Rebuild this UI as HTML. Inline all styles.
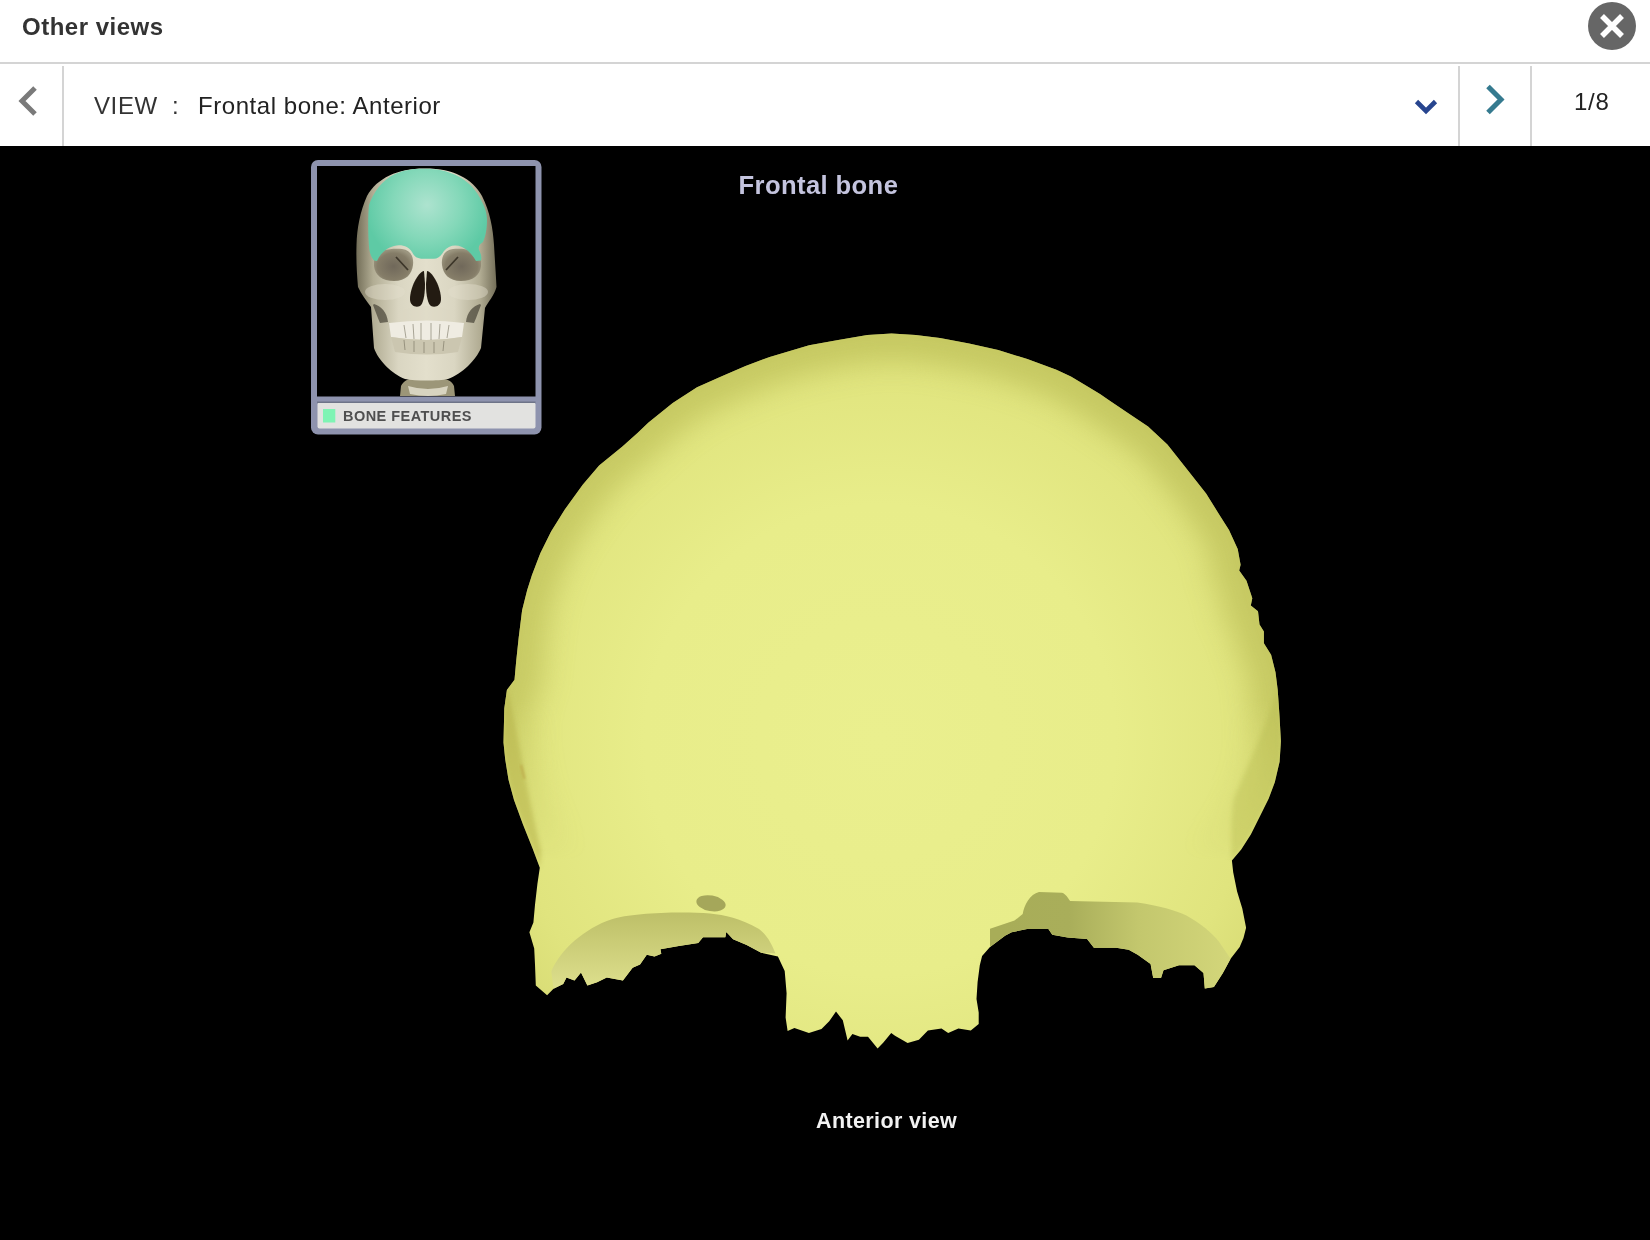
<!DOCTYPE html>
<html><head><meta charset="utf-8">
<style>
html,body{margin:0;padding:0;}
body{width:1650px;height:1240px;position:relative;overflow:hidden;background:#000;font-family:"Liberation Sans",sans-serif;}
.hdr{position:absolute;left:0;top:0;width:1650px;height:62px;background:#fff;}
.title{position:absolute;left:22px;top:11.5px;letter-spacing:0.5px;font-size:24px;font-weight:bold;color:#333;line-height:30px;white-space:nowrap;}
.hline{position:absolute;left:0;top:62px;width:1650px;height:2px;background:#d4d4d4;}
.bar{position:absolute;left:0;top:64px;width:1650px;height:82px;background:#fff;}
.vl{position:absolute;top:66px;width:2px;height:80px;background:#d4d4d4;}
.viewlbl{position:absolute;left:94px;top:91px;letter-spacing:0.6px;font-size:24px;color:#333;line-height:30px;white-space:nowrap;}
.viewval{position:absolute;left:198px;top:91px;letter-spacing:0.55px;font-size:24px;color:#222;line-height:30px;white-space:nowrap;}
.count{position:absolute;left:1574px;top:87px;letter-spacing:0.7px;font-size:24px;color:#222;line-height:30px;white-space:nowrap;}
.stage{position:absolute;left:0;top:146px;width:1650px;height:1094px;background:#000;}
svg{position:absolute;left:0;top:0;will-change:transform;}
.title,.viewlbl,.viewval,.count{will-change:transform;}
</style></head>
<body>
<div class="hdr"></div>
<div class="title">Other views</div>
<div class="hline"></div>
<div class="bar"></div>
<div class="vl" style="left:62px"></div>
<div class="vl" style="left:1458px"></div>
<div class="vl" style="left:1530px"></div>
<div class="viewlbl">VIEW</div><div class="viewlbl" style="left:172px">:</div>
<div class="viewval">Frontal bone: Anterior</div>
<div class="count">1/8</div>
<div class="stage"></div>
<svg width="1650" height="1240" viewBox="0 0 1650 1240">
  
  <defs>
    <radialGradient id="bg1" cx="880" cy="740" r="470" gradientUnits="userSpaceOnUse">
      <stop offset="0" stop-color="#eaef8e"/>
      <stop offset="0.5" stop-color="#e8ed8a"/>
      <stop offset="0.8" stop-color="#e0e47e"/>
      <stop offset="1" stop-color="#d4d770"/>
    </radialGradient>
    <linearGradient id="rimfade" x1="0" y1="700" x2="0" y2="860" gradientUnits="userSpaceOnUse"><stop offset="0" stop-color="#fff"/><stop offset="1" stop-color="#000"/></linearGradient>
    <mask id="rimmask" maskUnits="userSpaceOnUse" x="0" y="0" width="1650" height="1240"><rect x="0" y="0" width="1650" height="1240" fill="url(#rimfade)"/></mask>
    <clipPath id="boneclip"><path d="M891.5 333.6 L915.8 335.0 L940.0 338.1 L969.1 343.6 L998.2 349.9 L1027.3 359.1 L1056.4 369.8 L1070.9 376.5 L1085.5 385.3 L1100.0 394.0 L1109.4 400.6 L1128.7 413.5 L1148.1 426.5 L1167.4 444.5 L1186.8 469.0 L1206.1 493.5 L1219.0 514.2 L1229.0 530.0 L1237.7 548.9 L1240.6 564.8 L1239.2 570.6 L1246.5 580.8 L1252.3 598.2 L1250.8 605.5 L1258.0 611.3 L1259.5 624.4 L1263.9 631.6 L1263.9 643.2 L1271.1 654.8 L1275.5 672.3 L1277.7 689.7 L1279.1 710.0 L1279.6 717.8 L1280.9 741.2 L1279.6 761.7 L1274.8 782.3 L1268.6 798.8 L1260.4 815.2 L1250.8 834.4 L1241.2 849.5 L1231.9 860.6 L1233.2 872.3 L1237.1 891.6 L1242.3 908.4 L1246.1 927.7 L1243.5 938.1 L1239.7 947.1 L1230.6 958.7 L1222.9 972.9 L1213.9 987.1 L1204.8 988.4 L1203.5 972.9 L1194.5 965.2 L1179.0 965.2 L1163.5 970.3 L1161.0 978.1 L1153.2 978.1 L1150.6 963.9 L1137.7 954.8 L1128.7 949.7 L1116.2 947.7 L1093.9 947.7 L1087.1 939.0 L1067.7 937.6 L1052.3 934.7 L1048.4 928.9 L1027.1 928.9 L1011.6 932.3 L1005.0 935.8 L990.0 947.1 L982.1 956.1 L979.8 965.2 L977.6 982.1 L976.5 999.0 L978.7 1012.6 L978.7 1023.9 L970.8 1030.6 L958.4 1028.4 L948.2 1032.9 L941.5 1028.4 L927.9 1030.6 L918.9 1039.7 L907.6 1043.1 L895.0 1035.8 L891.2 1033.0 L883.4 1042.6 L877.6 1048.4 L868.0 1036.8 L860.2 1036.8 L852.4 1033.9 L847.6 1040.6 L842.8 1020.3 L836.0 1011.6 L829.2 1021.3 L821.5 1029.0 L808.9 1032.9 L794.4 1028.0 L787.6 1031.0 L785.6 1017.4 L786.6 993.2 L784.7 971.0 L777.9 956.5 L761.2 952.7 L746.7 945.0 L733.1 939.2 L726.3 931.9 L725.3 937.2 L703.0 937.2 L698.2 943.0 L678.8 946.0 L660.4 949.3 L661.3 953.7 L654.5 956.6 L646.8 954.7 L640.0 964.4 L632.6 967.7 L622.9 980.6 L606.8 977.4 L597.1 982.3 L587.4 985.5 L581.0 972.6 L574.5 980.6 L566.5 977.4 L563.2 983.9 L553.5 988.7 L547.1 995.2 L535.8 985.5 L535.0 964.5 L534.2 948.4 L529.4 932.3 L533.4 922.6 L535.0 904.8 L537.4 883.9 L539.8 867.7 L532.6 848.4 L522.9 824.2 L514.0 800.0 L508.5 779.7 L505.2 759.3 L503.5 742.4 L504.3 708.5 L506.9 690.0 L514.5 679.8 L516.2 661.1 L518.7 637.4 L522.1 610.3 L527.2 590.0 L531.9 575.3 L540.2 553.4 L551.1 531.5 L564.8 509.5 L582.7 484.8 L599.1 465.6 L622.4 446.5 L637.5 433.0 L648.5 422.4 L672.7 403.0 L697.0 387.3 L721.2 376.4 L745.5 366.0 L769.7 357.0 L809.1 345.2 L838.2 339.9 L867.3 335.0Z"/></clipPath>
    <filter id="blur6" x="-10%" y="-10%" width="120%" height="120%"><feGaussianBlur stdDeviation="14"/></filter>
  </defs>
  <path d="M891.5 333.6 L915.8 335.0 L940.0 338.1 L969.1 343.6 L998.2 349.9 L1027.3 359.1 L1056.4 369.8 L1070.9 376.5 L1085.5 385.3 L1100.0 394.0 L1109.4 400.6 L1128.7 413.5 L1148.1 426.5 L1167.4 444.5 L1186.8 469.0 L1206.1 493.5 L1219.0 514.2 L1229.0 530.0 L1237.7 548.9 L1240.6 564.8 L1239.2 570.6 L1246.5 580.8 L1252.3 598.2 L1250.8 605.5 L1258.0 611.3 L1259.5 624.4 L1263.9 631.6 L1263.9 643.2 L1271.1 654.8 L1275.5 672.3 L1277.7 689.7 L1279.1 710.0 L1279.6 717.8 L1280.9 741.2 L1279.6 761.7 L1274.8 782.3 L1268.6 798.8 L1260.4 815.2 L1250.8 834.4 L1241.2 849.5 L1231.9 860.6 L1233.2 872.3 L1237.1 891.6 L1242.3 908.4 L1246.1 927.7 L1243.5 938.1 L1239.7 947.1 L1230.6 958.7 L1222.9 972.9 L1213.9 987.1 L1204.8 988.4 L1203.5 972.9 L1194.5 965.2 L1179.0 965.2 L1163.5 970.3 L1161.0 978.1 L1153.2 978.1 L1150.6 963.9 L1137.7 954.8 L1128.7 949.7 L1116.2 947.7 L1093.9 947.7 L1087.1 939.0 L1067.7 937.6 L1052.3 934.7 L1048.4 928.9 L1027.1 928.9 L1011.6 932.3 L1005.0 935.8 L990.0 947.1 L982.1 956.1 L979.8 965.2 L977.6 982.1 L976.5 999.0 L978.7 1012.6 L978.7 1023.9 L970.8 1030.6 L958.4 1028.4 L948.2 1032.9 L941.5 1028.4 L927.9 1030.6 L918.9 1039.7 L907.6 1043.1 L895.0 1035.8 L891.2 1033.0 L883.4 1042.6 L877.6 1048.4 L868.0 1036.8 L860.2 1036.8 L852.4 1033.9 L847.6 1040.6 L842.8 1020.3 L836.0 1011.6 L829.2 1021.3 L821.5 1029.0 L808.9 1032.9 L794.4 1028.0 L787.6 1031.0 L785.6 1017.4 L786.6 993.2 L784.7 971.0 L777.9 956.5 L761.2 952.7 L746.7 945.0 L733.1 939.2 L726.3 931.9 L725.3 937.2 L703.0 937.2 L698.2 943.0 L678.8 946.0 L660.4 949.3 L661.3 953.7 L654.5 956.6 L646.8 954.7 L640.0 964.4 L632.6 967.7 L622.9 980.6 L606.8 977.4 L597.1 982.3 L587.4 985.5 L581.0 972.6 L574.5 980.6 L566.5 977.4 L563.2 983.9 L553.5 988.7 L547.1 995.2 L535.8 985.5 L535.0 964.5 L534.2 948.4 L529.4 932.3 L533.4 922.6 L535.0 904.8 L537.4 883.9 L539.8 867.7 L532.6 848.4 L522.9 824.2 L514.0 800.0 L508.5 779.7 L505.2 759.3 L503.5 742.4 L504.3 708.5 L506.9 690.0 L514.5 679.8 L516.2 661.1 L518.7 637.4 L522.1 610.3 L527.2 590.0 L531.9 575.3 L540.2 553.4 L551.1 531.5 L564.8 509.5 L582.7 484.8 L599.1 465.6 L622.4 446.5 L637.5 433.0 L648.5 422.4 L672.7 403.0 L697.0 387.3 L721.2 376.4 L745.5 366.0 L769.7 357.0 L809.1 345.2 L838.2 339.9 L867.3 335.0Z" fill="url(#bg1)"/>
  <g clip-path="url(#boneclip)" mask="url(#rimmask)"><path d="M891.5 333.6 L915.8 335.0 L940.0 338.1 L969.1 343.6 L998.2 349.9 L1027.3 359.1 L1056.4 369.8 L1070.9 376.5 L1085.5 385.3 L1100.0 394.0 L1109.4 400.6 L1128.7 413.5 L1148.1 426.5 L1167.4 444.5 L1186.8 469.0 L1206.1 493.5 L1219.0 514.2 L1229.0 530.0 L1237.7 548.9 L1240.6 564.8 L1239.2 570.6 L1246.5 580.8 L1252.3 598.2 L1250.8 605.5 L1258.0 611.3 L1259.5 624.4 L1263.9 631.6 L1263.9 643.2 L1271.1 654.8 L1275.5 672.3 L1277.7 689.7 L1279.1 710.0 L1279.6 717.8 L1280.9 741.2 L1279.6 761.7 L1274.8 782.3 L1268.6 798.8 L1260.4 815.2 L1250.8 834.4 L1241.2 849.5 L1231.9 860.6 L1233.2 872.3 L1237.1 891.6 L1242.3 908.4 L1246.1 927.7 L1243.5 938.1 L1239.7 947.1 L1230.6 958.7 L1222.9 972.9 L1213.9 987.1 L1204.8 988.4 L1203.5 972.9 L1194.5 965.2 L1179.0 965.2 L1163.5 970.3 L1161.0 978.1 L1153.2 978.1 L1150.6 963.9 L1137.7 954.8 L1128.7 949.7 L1116.2 947.7 L1093.9 947.7 L1087.1 939.0 L1067.7 937.6 L1052.3 934.7 L1048.4 928.9 L1027.1 928.9 L1011.6 932.3 L1005.0 935.8 L990.0 947.1 L982.1 956.1 L979.8 965.2 L977.6 982.1 L976.5 999.0 L978.7 1012.6 L978.7 1023.9 L970.8 1030.6 L958.4 1028.4 L948.2 1032.9 L941.5 1028.4 L927.9 1030.6 L918.9 1039.7 L907.6 1043.1 L895.0 1035.8 L891.2 1033.0 L883.4 1042.6 L877.6 1048.4 L868.0 1036.8 L860.2 1036.8 L852.4 1033.9 L847.6 1040.6 L842.8 1020.3 L836.0 1011.6 L829.2 1021.3 L821.5 1029.0 L808.9 1032.9 L794.4 1028.0 L787.6 1031.0 L785.6 1017.4 L786.6 993.2 L784.7 971.0 L777.9 956.5 L761.2 952.7 L746.7 945.0 L733.1 939.2 L726.3 931.9 L725.3 937.2 L703.0 937.2 L698.2 943.0 L678.8 946.0 L660.4 949.3 L661.3 953.7 L654.5 956.6 L646.8 954.7 L640.0 964.4 L632.6 967.7 L622.9 980.6 L606.8 977.4 L597.1 982.3 L587.4 985.5 L581.0 972.6 L574.5 980.6 L566.5 977.4 L563.2 983.9 L553.5 988.7 L547.1 995.2 L535.8 985.5 L535.0 964.5 L534.2 948.4 L529.4 932.3 L533.4 922.6 L535.0 904.8 L537.4 883.9 L539.8 867.7 L532.6 848.4 L522.9 824.2 L514.0 800.0 L508.5 779.7 L505.2 759.3 L503.5 742.4 L504.3 708.5 L506.9 690.0 L514.5 679.8 L516.2 661.1 L518.7 637.4 L522.1 610.3 L527.2 590.0 L531.9 575.3 L540.2 553.4 L551.1 531.5 L564.8 509.5 L582.7 484.8 L599.1 465.6 L622.4 446.5 L637.5 433.0 L648.5 422.4 L672.7 403.0 L697.0 387.3 L721.2 376.4 L745.5 366.0 L769.7 357.0 L809.1 345.2 L838.2 339.9 L867.3 335.0Z" fill="none" stroke="#b4b650" stroke-width="56" filter="url(#blur6)" opacity="0.55"/></g>

  <g clip-path="url(#boneclip)"><path d="M506.9 690 C 512 705 516 730 521 755 C 526 785 534 820 541 850 L539.8 867.7 L532.6 848.4 L522.9 824.2 L514 800 L508.5 779.7 L505.2 759.3 L503.5 742.4 L504.3 708.5 Z" fill="#b4b04a" opacity="0.5" filter="url(#blur2)"/></g>
  <path d="M521 765 L524.5 779" stroke="#b89a3c" stroke-width="2.5" opacity="0.5" filter="url(#blur1)"/>
  <g clip-path="url(#boneclip)"><path d="M1277.7 689.7 C 1272 705 1268 718 1264 727 C 1256 748 1244 775 1234 798 C 1231 815 1231 840 1231.9 860.6 L1241.2 849.5 L1250.8 834.4 L1260.4 815.2 L1268.6 798.8 L1274.8 782.3 L1279.6 761.7 L1280.9 741.2 L1279.6 717.8 L1279.1 710 Z" fill="#b4b850" opacity="0.35" filter="url(#blur2)"/></g>
  <defs>
    <filter id="blur2" x="-20%" y="-20%" width="140%" height="140%"><feGaussianBlur stdDeviation="2"/></filter><filter id="blur1" x="-50%" y="-50%" width="200%" height="200%"><feGaussianBlur stdDeviation="0.8"/></filter>
    <linearGradient id="orbL" x1="0" y1="912" x2="0" y2="985" gradientUnits="userSpaceOnUse">
      <stop offset="0" stop-color="#bdbf68"/>
      <stop offset="0.35" stop-color="#c8ca74"/>
      <stop offset="1" stop-color="#dcde8c"/>
    </linearGradient>
    <linearGradient id="orbR" x1="1000" y1="0" x2="1230" y2="0" gradientUnits="userSpaceOnUse">
      <stop offset="0" stop-color="#a8ad58"/>
      <stop offset="0.3" stop-color="#a9ae5a"/>
      <stop offset="0.6" stop-color="#c3c76d"/>
      <stop offset="1" stop-color="#d3d67a"/>
    </linearGradient>
  </defs>
  <path d="M551.3 971.6 C 560 950 585 928 611.8 919.3 C 630 913 680 911 710 913.5 C 725 915 740 918 759 929 C 768 936 772 945 775.5 953.6 L761.2 952.7 L746.7 945 L733.1 939.2 L726.3 931.9 L725.3 937.2 L703 937.2 L698.2 943 L678.8 946 L660.4 949.3 L661.3 953.7 L654.5 956.6 L646.8 954.7 L640 964.4 L632.6 967.7 L622.9 980.6 L606.8 977.4 L597.1 982.3 L587.4 985.5 L581 972.6 L574.5 980.6 L566.5 977.4 L563.2 983.9 L553.5 988.7 Z" fill="url(#orbL)"/>
  <path d="M990 947.1 L990 928.7 L1014.5 920.6 L1022.7 914 C 1024 905 1030 894 1039 891.9 L1062 892.7 C 1066 894 1068 898 1070.2 901 L1137.3 902.5 C 1160 906 1175 910 1186.4 915.6 C 1200 923 1212 933 1219 941.8 L1230.6 958.7 L1222.9 972.9 L1213.9 987.1 L1204.8 988.4 L1203.5 972.9 L1194.5 965.2 L1179 965.2 L1163.5 970.3 L1161 978.1 L1153.2 978.1 L1150.6 963.9 L1137.7 954.8 L1128.7 949.7 L1116.2 947.7 L1093.9 947.7 L1087.1 939 L1067.7 937.6 L1052.3 934.7 L1048.4 928.9 L1027.1 928.9 L1011.6 932.3 L1005 935.8 Z" fill="url(#orbR)"/>

  <ellipse cx="711" cy="903.3" rx="14.8" ry="7.8" transform="rotate(10 711 903.3)" fill="#a5a75a"/>
  <text x="738.5" y="194" font-family="Liberation Sans" font-weight="bold" font-size="25.6" letter-spacing="0.4" fill="#c4c4de">Frontal bone</text>
  <text x="816" y="1128" font-family="Liberation Sans" font-weight="bold" font-size="21.5" letter-spacing="0.38" fill="#f2f2f2">Anterior view</text>

  
  <!-- thumbnail -->
  <defs>
    <linearGradient id="skullg" x1="0" y1="0" x2="1" y2="0">
      <stop offset="0" stop-color="#736e58"/>
      <stop offset="0.12" stop-color="#b2ad94"/>
      <stop offset="0.3" stop-color="#dad6c2"/>
      <stop offset="0.5" stop-color="#e3dfcc"/>
      <stop offset="0.7" stop-color="#dad6c2"/>
      <stop offset="0.88" stop-color="#b2ad94"/>
      <stop offset="1" stop-color="#736e58"/>
    </linearGradient>
    <radialGradient id="tealg" cx="427" cy="205" r="62" gradientUnits="userSpaceOnUse">
      <stop offset="0" stop-color="#ade3cf"/>
      <stop offset="0.55" stop-color="#84d8b9"/>
      <stop offset="1" stop-color="#5ecaa5"/>
    </radialGradient>
    <radialGradient id="orbg" cx="0.5" cy="0.55" r="0.55">
      <stop offset="0" stop-color="#70685a"/>
      <stop offset="0.75" stop-color="#857d68"/>
      <stop offset="1" stop-color="#9c9680"/>
    </radialGradient>
  </defs>
  <rect x="311" y="160" width="230.5" height="274.5" rx="7" fill="#8e93ae"/>
  <rect x="317" y="166" width="218.5" height="230.5" fill="#000"/>
  <rect x="317.5" y="402.5" width="218" height="26" rx="2" fill="#e2e2e0"/>
  <rect x="317" y="401.5" width="218.5" height="1.5" fill="#6e7488"/>
  <rect x="323" y="409" width="12.3" height="13.5" fill="#7ff4b4"/>
  <text x="343" y="421" font-family="Liberation Sans" font-weight="bold" font-size="14.5" letter-spacing="0.46" fill="#4f4f4f">BONE FEATURES</text>
  <!-- neck -->
  <path d="M400 396 L401 386 C 404 380 410 378 414 379 L 440 379 C 446 378 452 381 454 386 L455 396 Z" fill="#9c9678"/>
  <path d="M408 386 Q428 392 448 386 L446 394 Q428 398 410 394Z" fill="#d8d4c0"/>
  <!-- skull -->
  <path d="M424 168.5 C 452 168 472 178 482 196 C 490 212 493 228 494 245 C 495 262 496 276 496.5 287 C 494 296 488 302 485 308 L 481 348 C 476 360 462 374 448 379 C 438 381 416 381 405 379 C 392 374 378 360 374 348 L 371 307 C 366 300 361 294 358 287 C 357 275 356 262 356.5 245 C 357 228 360 212 367 196 C 377 178 398 168.5 424 168.5 Z" fill="url(#skullg)"/>
  <!-- cheekbones bright -->
  <ellipse cx="385" cy="292" rx="20" ry="8" fill="#e2decb" opacity="0.45"/>
  <ellipse cx="468" cy="292" rx="20" ry="8" fill="#e2decb" opacity="0.45"/>
  <ellipse cx="426" cy="316" rx="28" ry="10" fill="#dcd8c4" opacity="0.4"/>
  <!-- cheek shadows -->
  <path d="M374 304 C 381 306 387 312 388 322 L 380 323 C 377 316 375 310 373 305Z" fill="#4e4a3c" opacity="0.75"/>
  <path d="M480 304 C 473 306 467 312 466 322 L 474 323 C 477 316 479 310 481 305Z" fill="#4e4a3c" opacity="0.75"/>
  <!-- orbits -->
  <path d="M374 256 C 378 250 392 248 402 249 C 410 250 414 256 413 265 C 412 274 406 281 394 281 C 382 281 375 275 374 266Z" fill="url(#orbg)"/>
  <path d="M481 256 C 477 250 463 248 453 249 C 445 250 441 256 442 265 C 443 274 449 281 461 281 C 473 281 480 275 481 266Z" fill="url(#orbg)"/>
  <path d="M396 257 L408 270 M458 257 L446 270" stroke="#2d271c" stroke-width="1.8" opacity="0.8"/>
  <!-- teal frontal -->
  <path d="M423 168.7 C 445 168 466 176 477 193 C 484 204 487 212 487 220 C 487 230 485 238 483 242 C 480 244 478 246 479 250 C 481 254 482 257 481 260.6 L 476 261 C 472 254 468 250 462 247 C 455 244 448 246 444 251 C 441 256 438 259 433 258.7 L 421 258.7 C 416 258 414 256 412 252 C 409 247 402 244 394 246 C 386 248 380 254 377 261 L 374 260.6 C 370 256 369 250 368.7 242 C 368 230 368 215 369 205 C 373 193 382 180 395 174 C 404 170 413 168.7 423 168.7Z" fill="url(#tealg)"/>
  <!-- nose -->
  <path d="M424 271 C 418 272 410 288 410 299 C 410 306 416 308 420 306 C 423 304 425 296 425 284Z" fill="#231b12"/>
  <path d="M427 271 C 433 272 441 288 441 299 C 441 306 435 308 431 306 C 428 304 426 296 426 284Z" fill="#231b12"/>
  <!-- teeth -->
  <path d="M389 323 Q427 318 464 323 L 462 337 Q 427 343 391 337Z" fill="#efece2"/>
  <path d="M391 337 Q427 343 462 337 L 458 352 Q 427 357 395 352Z" fill="#cbc6b0"/>
  <path d="M404 325 L406 338 M413 324 L414 339 M421 323 L421 340 M431 323 L431 340 M440 324 L439 339 M449 325 L447 338 M404 340 L405 350 M414 341 L414 352 M424 342 L424 353 M434 342 L434 353 M444 341 L443 351" stroke="#6d6856" stroke-width="1" opacity="0.55"/>
  <!-- close button -->
  <circle cx="1612" cy="26" r="24" fill="#666"/>
  <path d="M1602 16 L1622 36 M1622 16 L1602 36" stroke="#fff" stroke-width="5.5" fill="none"/>
  <!-- left chevron -->
  <path d="M35 88 L22 101 L35 114" stroke="#7a7a7a" stroke-width="5" fill="none"/>
  <!-- dropdown chevron -->
  <path d="M1416.5 101.5 L1426 111 L1435.5 101.5" stroke="#27458f" stroke-width="4.6" fill="none"/>
  <!-- next chevron -->
  <path d="M1488 86.5 L1501 99.5 L1488 112.5" stroke="#357a8f" stroke-width="5" fill="none"/>
</svg>
</body></html>
